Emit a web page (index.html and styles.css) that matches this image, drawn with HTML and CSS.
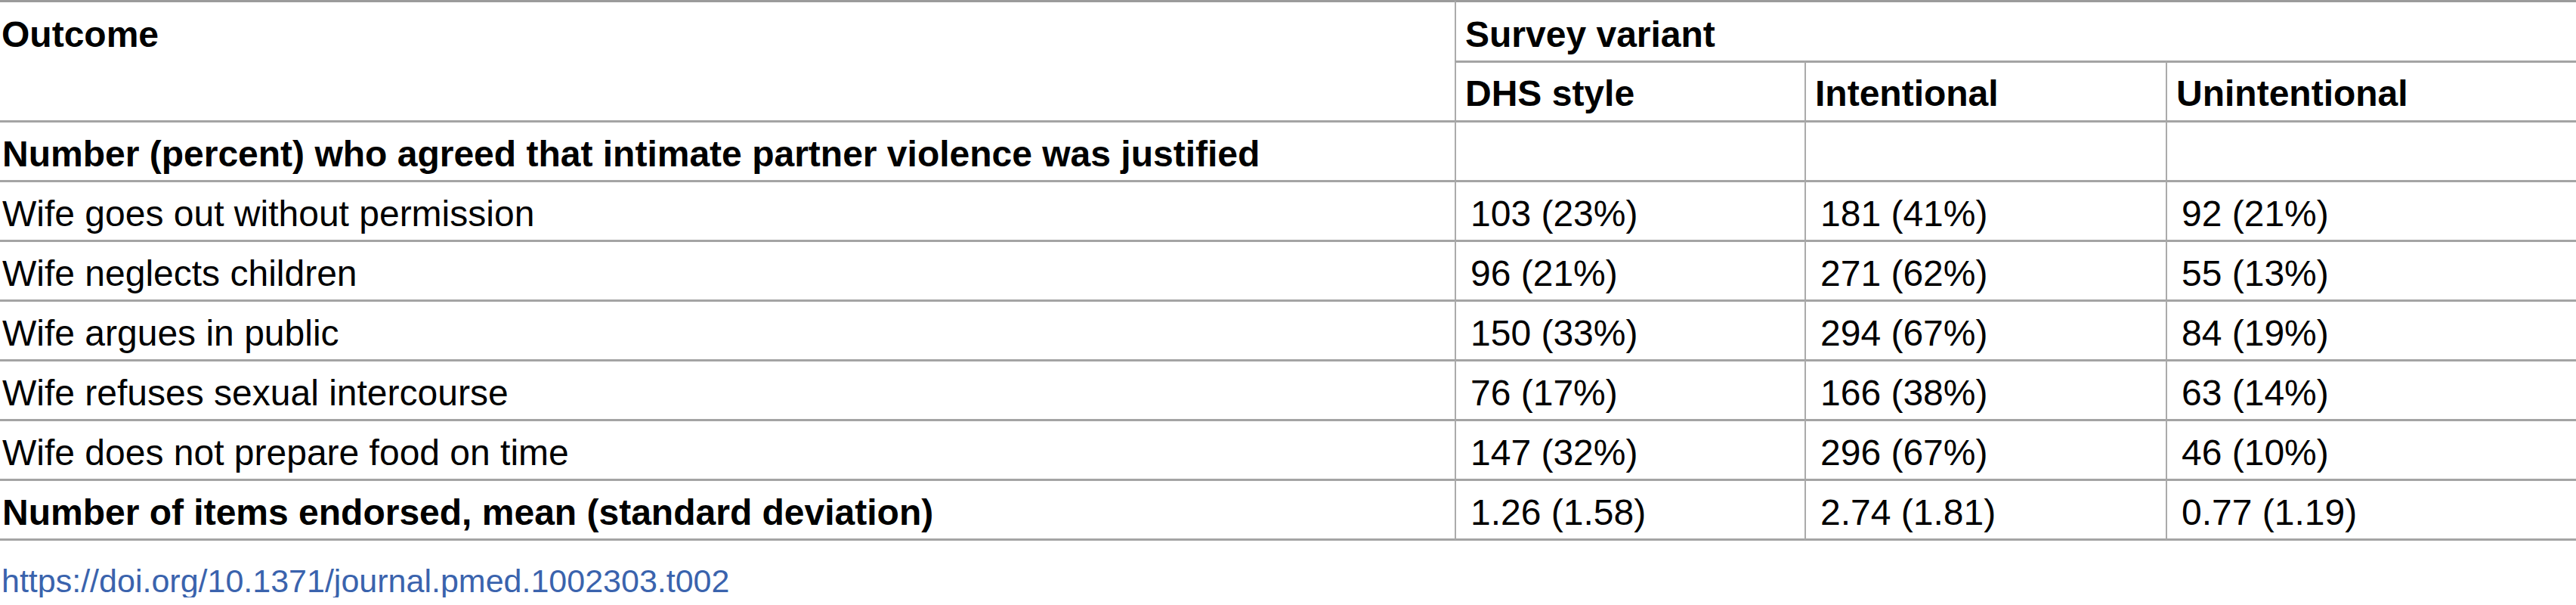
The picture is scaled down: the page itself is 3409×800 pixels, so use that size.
FILE: index.html
```html
<!DOCTYPE html>
<html lang="en">
<head>
<meta charset="utf-8">
<title>Table</title>
<link rel="stylesheet" href="styles.css">
</head>
<body>
<table class="tbl">
  <colgroup>
    <col class="c1">
    <col class="c2">
    <col class="c3">
    <col class="c4">
  </colgroup>
  <thead>
    <tr class="h1">
      <th class="first" rowspan="2">Outcome</th>
      <th class="grp" colspan="3">Survey variant</th>
    </tr>
    <tr class="h2">
      <th>DHS style</th>
      <th>Intentional</th>
      <th>Unintentional</th>
    </tr>
  </thead>
  <tbody>
    <tr>
      <td class="first bold">Number (percent) who agreed that intimate partner violence was justified</td>
      <td></td>
      <td></td>
      <td></td>
    </tr>
    <tr>
      <td class="first">Wife goes out without permission</td>
      <td>103 (23%)</td>
      <td>181 (41%)</td>
      <td>92 (21%)</td>
    </tr>
    <tr>
      <td class="first">Wife neglects children</td>
      <td>96 (21%)</td>
      <td>271 (62%)</td>
      <td>55 (13%)</td>
    </tr>
    <tr>
      <td class="first">Wife argues in public</td>
      <td>150 (33%)</td>
      <td>294 (67%)</td>
      <td>84 (19%)</td>
    </tr>
    <tr>
      <td class="first">Wife refuses sexual intercourse</td>
      <td>76 (17%)</td>
      <td>166 (38%)</td>
      <td>63 (14%)</td>
    </tr>
    <tr>
      <td class="first">Wife does not prepare food on time</td>
      <td>147 (32%)</td>
      <td>296 (67%)</td>
      <td>46 (10%)</td>
    </tr>
    <tr class="last">
      <td class="first bold">Number of items endorsed, mean (standard deviation)</td>
      <td>1.26 (1.58)</td>
      <td>2.74 (1.81)</td>
      <td>0.77 (1.19)</td>
    </tr>
  </tbody>
</table>
<div class="doi"><a class="doi-link" href="#">https://doi.org/10.1371/journal.pmed.1002303.t002</a></div>
</body>
</html>
```
FILE: styles.css
```css
html, body {
  margin: 0;
  padding: 0;
  background: #ffffff;
}

body {
  font-family: "Liberation Sans", Arial, Helvetica, sans-serif;
  font-size: 48px;
  color: #000000;
  width: 3409px;
  overflow: hidden;
}

.tbl {
  width: 3409px;
  table-layout: fixed;
  border-collapse: separate;
  border-spacing: 0;
}

.c1 { width: 1925px; }
.c2 { width: 463px; }
.c3 { width: 478px; }
.c4 { width: 543px; }

.tbl th,
.tbl td {
  text-align: left;
  vertical-align: top;
  line-height: 48px;
  white-space: nowrap;
  border-top: 3px solid #a4a4a4;
  border-left: 2px solid #ababab;
  padding: 18px 4px 10px 19px;
}

.tbl th {
  font-weight: bold;
  padding-left: 12px;
}

.tbl .first {
  border-left: none;
  padding-left: 3px;
}

.tbl .bold {
  font-weight: bold;
}

.h1 th {
  border-top: 3px solid #9b9b9b;
  padding-top: 19px;
  padding-bottom: 10px;
}

.h1 th.first {
  padding-left: 2px;
}

.h2 th {
  padding-top: 17px;
  padding-bottom: 11px;
}

.last td {
  border-bottom: 3px solid #a4a4a4;
}

.doi {
  margin-top: 32px;
  padding-left: 2px;
  font-size: 43px;
  line-height: 43px;
}

.doi-link {
  color: #3a63ad;
  text-decoration: none;
}
```
